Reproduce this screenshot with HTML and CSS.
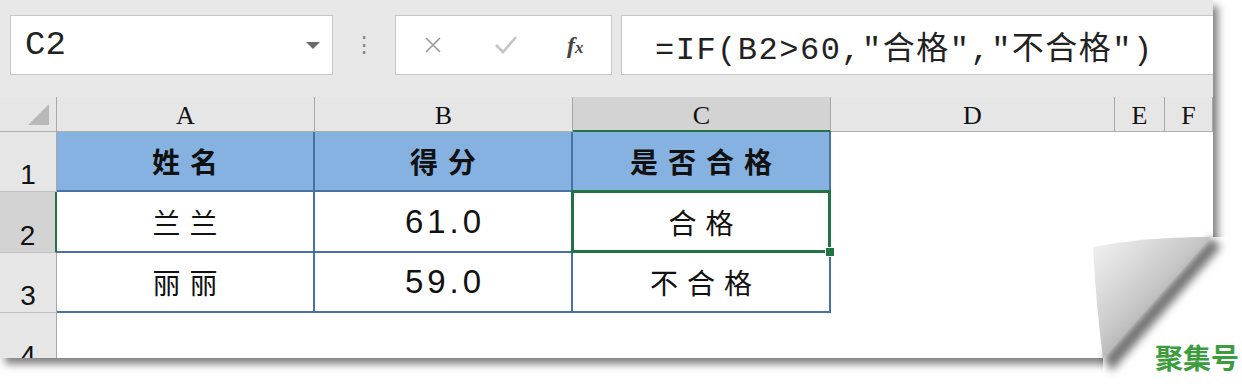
FILE: index.html
```html
<!DOCTYPE html>
<html lang="zh">
<head>
    <meta charset="UTF-8">
    <meta name="viewport" content="width=device-width, initial-scale=1.0">
    <link rel="stylesheet" href="styles.css">
    <title>IF 函数 - 是否合格</title>
</head>
<body>
    <div class="page">
        <div class="toolbar">
            <div class="namebox">
                <span class="ref">C2</span>
                <span class="drop"></span>
            </div>
            <div class="grip">⋮</div>
            <div class="fnbox">
                <svg class="icon" width="20" height="20" viewBox="0 0 20 20">
                    <path d="M3 3 L17 17 M17 3 L3 17" stroke="#9a9a9a" stroke-width="1.6" fill="none"/>
                </svg>
                <svg class="icon" width="24" height="20" viewBox="0 0 24 20">
                    <path d="M2 10 L9 17 L22 2" stroke="#c4c4c4" stroke-width="2.6" fill="none"/>
                </svg>
                <span class="fx">f<i>x</i></span>
            </div>
            <div class="formula">=IF(B2&gt;60,"合格","不合格")</div>
        </div>

        <div class="sheet">
            <!-- column headers -->
            <div class="corner"><span class="tri"></span></div>
            <div class="colhead">A</div>
            <div class="colhead">B</div>
            <div class="colhead active">C</div>
            <div class="colhead">D</div>
            <div class="colhead">E</div>
            <div class="colhead">F</div>

            <!-- row 1 -->
            <div class="rowhead">1</div>
            <div class="cell head">姓名</div>
            <div class="cell head">得分</div>
            <div class="cell head">是否合格</div>
            <div class="blank"></div>

            <!-- row 2 -->
            <div class="rowhead active">2</div>
            <div class="cell">兰兰</div>
            <div class="cell num">61.0</div>
            <div class="cell selected">合格<span class="handle"></span></div>
            <div class="blank"></div>

            <!-- row 3 -->
            <div class="rowhead">3</div>
            <div class="cell">丽丽</div>
            <div class="cell num">59.0</div>
            <div class="cell">不合格</div>
            <div class="blank"></div>

            <!-- row 4 -->
            <div class="rowhead">4</div>
            <div class="blank wide"></div>
        </div>
    </div>

    <!-- page curl in the bottom right corner -->
    <svg class="curl" width="162" height="163" viewBox="0 0 162 163">
        <defs>
            <linearGradient id="curlFill" x1="0" y1="0" x2="1" y2="1">
                <stop offset="0" stop-color="#f4f4f4"/>
                <stop offset="0.45" stop-color="#c9c9c9"/>
                <stop offset="1" stop-color="#6e6e6e"/>
            </linearGradient>
            <filter id="soft" x="-30%" y="-30%" width="160%" height="160%">
                <feGaussianBlur stdDeviation="4"/>
            </filter>
        </defs>
        <path d="M131 12 L162 12 L162 163 L23 163 L23 133 Z" fill="#ffffff"/>
        <path d="M131 12 L23 133 L32 146 L141 22 Z" fill="rgba(0,0,0,0.55)" filter="url(#soft)"/>
        <path d="M13 22 Q70 11 131 12 L23 133 Q16 80 13 22 Z" fill="url(#curlFill)"/>
    </svg>

    <div class="mark">聚集号</div>
</body>
</html>
```

FILE: styles.css
```css
body{
    margin: 0;
    background-color: #ffffff;
    width: 1242px;
    height: 388px;
    overflow: hidden;
    font-family: "Liberation Sans", "Noto Sans CJK SC", sans-serif;
}

.page{
    width: 1213px;
    height: 358px;
    overflow: hidden;
    background-color: #e8e8e8;
    box-shadow: 5px 6px 8px rgba(0, 0, 0, 0.5);
    display: flex;
    flex-direction: column;
}

/* formula bar */
.toolbar{
    height: 97px;
    box-sizing: border-box;
    padding: 15px 0 0 10px;
    display: flex;
    align-items: flex-start;
    flex-shrink: 0;
}

.namebox, .fnbox, .formula{
    height: 60px;
    box-sizing: border-box;
    background-color: #ffffff;
    border: 1px solid #c6c6c6;
    display: flex;
    align-items: center;
}

.namebox{
    width: 323px;
    padding: 0 12px 0 14px;
    justify-content: space-between;
}

.ref{
    font-family: "Liberation Mono", monospace;
    font-size: 34px;
    color: #222;
}

.drop{
    width: 0;
    height: 0;
    border-left: 7px solid transparent;
    border-right: 7px solid transparent;
    border-top: 7px solid #6a6a6a;
    margin-right: 0;
}

.grip{
    width: 62px;
    height: 60px;
    display: flex;
    align-items: center;
    justify-content: center;
    color: #8a8a8a;
    font-size: 22px;
}

.fnbox{
    width: 217px;
    padding-left: 27px;
}

.fnbox .icon + .icon{
    margin-left: 51px;
}

.fx{
    margin-left: 49px;
    font-family: "Liberation Serif", serif;
    font-style: italic;
    font-weight: bold;
    font-size: 24px;
    color: #444;
}

.fx i{
    font-size: 17px;
}

.formula{
    flex: 1;
    margin-left: 9px;
    border-right: none;
    padding-left: 33px;
    font-family: "Liberation Mono", "Noto Sans CJK SC", monospace;
    font-size: 32px;
    letter-spacing: 1.5px;
    color: #222;
}

/* worksheet */
.sheet{
    flex: 1;
    display: grid;
    grid-template-columns: 57px 258px 258px 258px 284px 50px 48px;
    grid-template-rows: 35px 60px 61px 60px 60px;
    background-color: #ffffff;
}

.corner, .colhead{
    background-color: #e6e6e6;
    border-bottom: 1px solid #b0b0b0;
    box-sizing: border-box;
}

.corner{
    border-right: 1px solid #a8a8a8;
    position: relative;
}

.tri{
    position: absolute;
    right: 7px;
    bottom: 6px;
    width: 0;
    height: 0;
    border-left: 21px solid transparent;
    border-bottom: 21px solid #b9b9b9;
}

.colhead{
    border-right: 1px solid #a8a8a8;
    display: flex;
    justify-content: center;
    align-items: center;
    padding-top: 4px;
    font-family: "Liberation Serif", serif;
    font-size: 26px;
    color: #111;
}

.colhead.active{
    background-color: #d3d3d3;
    border-bottom: 2px solid #217346;
}

.rowhead{
    background-color: #e6e6e6;
    border-right: 1px solid #a8a8a8;
    border-bottom: 1px solid #c0c0c0;
    box-sizing: border-box;
    display: flex;
    justify-content: center;
    align-items: flex-end;
    padding-bottom: 2px;
    font-size: 28px;
    line-height: 1;
    color: #111;
}

.rowhead.active{
    background-color: #d3d3d3;
    border-right: 2px solid #217346;
}

.cell{
    box-sizing: border-box;
    border-right: 2px solid #4673a3;
    border-bottom: 2px solid #4673a3;
    display: flex;
    justify-content: center;
    align-items: center;
    font-family: "Noto Sans CJK SC", sans-serif;
    font-size: 28px;
    letter-spacing: 9px;
    padding-left: 9px;
    color: #111;
}

.cell.head{
    background-color: #85b2e1;
    font-weight: bold;
    letter-spacing: 10px;
    padding-left: 10px;
}

.cell.num{
    font-family: "Liberation Sans", sans-serif;
    font-size: 33px;
    letter-spacing: 4px;
    padding-left: 4px;
}

.cell.selected{
    position: relative;
}

.cell.selected::after{
    content: "";
    position: absolute;
    left: -2px;
    top: -2px;
    right: -2px;
    bottom: -2px;
    border: 3px solid #217346;
}

.handle{
    position: absolute;
    right: -6px;
    bottom: -6px;
    width: 8px;
    height: 8px;
    background-color: #217346;
    border: 1px solid #ffffff;
    z-index: 1;
}

.blank{
    grid-column: span 3;
}

.blank.wide{
    grid-column: span 6;
}

.curl{
    position: absolute;
    left: 1080px;
    top: 225px;
}

.mark{
    position: absolute;
    left: 1155px;
    top: 341px;
    font-family: "Noto Sans CJK SC", sans-serif;
    font-weight: bold;
    font-size: 28px;
    line-height: 1.2;
    color: #3b9d3c;
}
```
